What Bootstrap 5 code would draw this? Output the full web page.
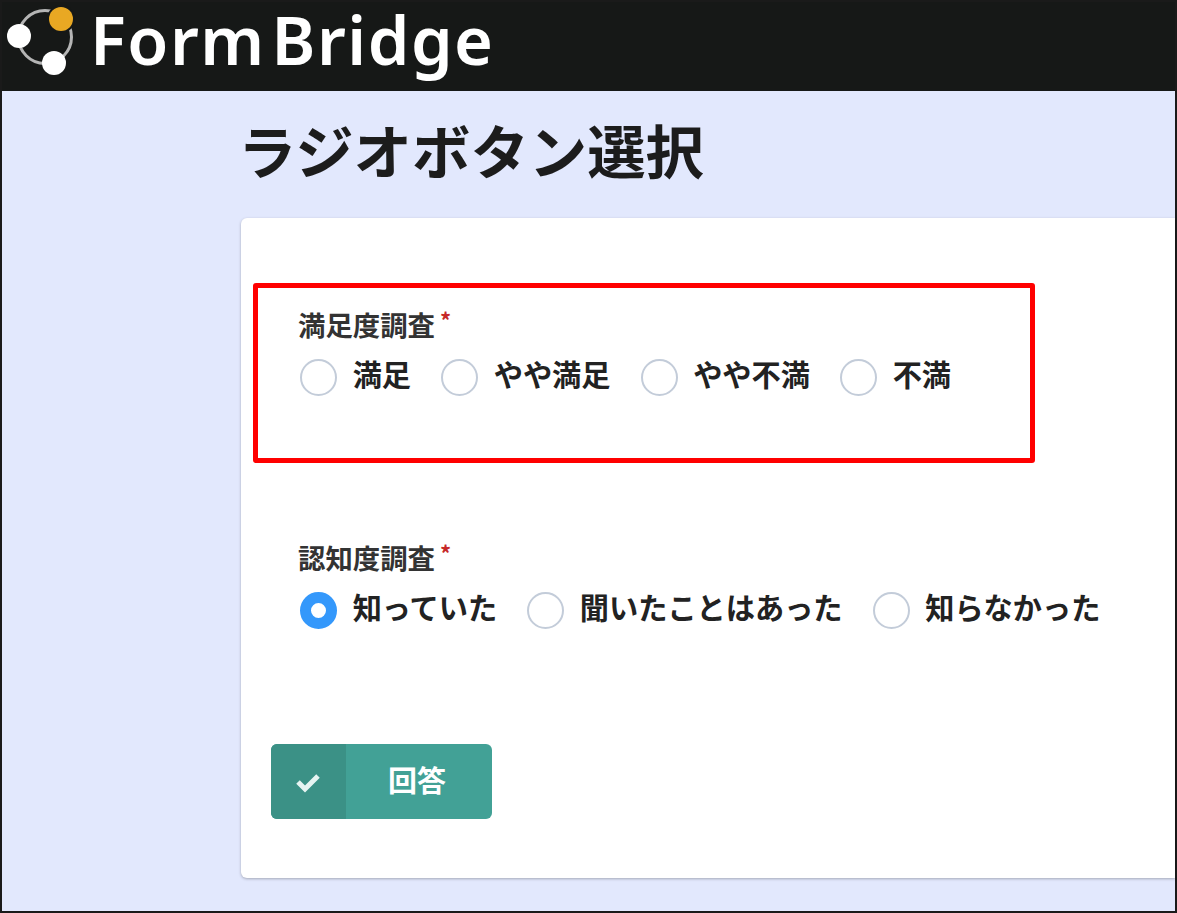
<!DOCTYPE html>
<html lang="ja">
<head>
<meta charset="utf-8">
<title>ラジオボタン選択</title>
<link href="https://cdn.jsdelivr.net/npm/bootstrap@5.3.0/dist/css/bootstrap.min.css" rel="stylesheet">
<style>
html,body{height:100%;margin:0}
body{font-family:"Noto Sans CJK JP","Noto Sans",sans-serif;background:#fff;overflow:hidden}
.fb-frame{width:1177px;height:913px;border:2px solid #1a1a1a;background:#e2e8fd;display:flex;flex-direction:column}
.fb-head{height:89px;background:#161817;flex:none;align-items:center;padding-left:2px}
.fb-logo{width:74px;height:76px;flex:none;margin-top:-8px}
.fb-brand{font-family:"Noto Sans",sans-serif;font-weight:600;font-size:66.6px;line-height:75px;padding-bottom:14px;color:#fff;margin-left:12px;white-space:pre;letter-spacing:1.5px;word-spacing:-13px}
.fb-main{padding-left:239px;flex:1}
.fb-title{font-size:58.4px;font-weight:700;color:#1c1c1c;line-height:70px;margin:23px 0 34px -3px;white-space:nowrap}
.fb-card{height:660px;width:934px;background:#fff;border-radius:6px 0 0 6px;box-shadow:0 1px 3px rgba(0,0,0,.28);padding-top:65px;padding-left:12px}
.fb-box{width:782px;height:180px;border:5px solid #f00;border-radius:3px;padding:17px 0 0 42px;margin-bottom:75px}
.fb-field{padding-left:47px;margin-bottom:115px}
.fb-label{font-size:27.4px;font-weight:700;color:#333;line-height:38px;white-space:nowrap;margin:0 0 14px -2px}
.fb-req{color:#c62828;font-size:22px;line-height:1;vertical-align:7px;margin-left:5px}
.fb-opts{gap:30px;white-space:nowrap}
.fb-opt{gap:15.7px;align-items:flex-start;height:39px;font-size:29.2px;font-weight:700;color:#222;line-height:32px}
.fb-radio{width:37px;height:37px;margin-top:2px;border-radius:50%;border:2px solid #c3ccd9;background:#fff;flex:none}
.fb-radio.fb-on{border:11px solid #3498fb}
.fb-submit{margin-left:17.5px;width:221px;height:75px;background:#42a196;border-radius:6px;overflow:hidden;color:#fff}
.fb-check{width:75px;background:#3b9186;flex:none}
.fb-send{font-size:29px;font-weight:700;flex:1;padding:0 3px 3px 0}
</style>
</head>
<body>
<div class="fb-frame">
  <header class="fb-head d-flex">
    <svg class="fb-logo" viewBox="0 0 74 76" aria-hidden="true">
      <circle cx="41" cy="32" r="26.5" fill="none" stroke="#b5b5b5" stroke-width="3"/>
      <circle cx="15" cy="31" r="12" fill="#fff"/>
      <circle cx="50" cy="58" r="12" fill="#fff"/>
      <circle cx="57" cy="14" r="14" fill="#161817"/>
      <circle cx="57" cy="14" r="12" fill="#e9a823"/>
    </svg>
    <div class="fb-brand">Form Bridge</div>
  </header>
  <main class="fb-main">
    <h1 class="fb-title">ラジオボタン選択</h1>
    <div class="fb-card">
      <div class="fb-box">
        <div class="fb-label">満足度調査<span class="fb-req">*</span></div>
        <div class="d-flex fb-opts">
          <div class="d-flex fb-opt"><span class="fb-radio"></span>満足</div>
          <div class="d-flex fb-opt"><span class="fb-radio"></span>やや満足</div>
          <div class="d-flex fb-opt"><span class="fb-radio"></span>やや不満</div>
          <div class="d-flex fb-opt"><span class="fb-radio"></span>不満</div>
        </div>
      </div>
      <div class="fb-field">
        <div class="fb-label">認知度調査<span class="fb-req">*</span></div>
        <div class="d-flex fb-opts">
          <div class="d-flex fb-opt"><span class="fb-radio fb-on"></span>知っていた</div>
          <div class="d-flex fb-opt"><span class="fb-radio"></span>聞いたことはあった</div>
          <div class="d-flex fb-opt"><span class="fb-radio"></span>知らなかった</div>
        </div>
      </div>
      <div class="fb-submit d-flex">
        <span class="fb-check d-flex align-items-center justify-content-center">
          <svg width="26" height="22" viewBox="0 0 26 22" aria-hidden="true"><path d="M3 11l7 7L23 5" fill="none" stroke="#e6f4f2" stroke-width="5"/></svg>
        </span>
        <span class="fb-send d-flex align-items-center justify-content-center">回答</span>
      </div>
    </div>
  </main>
</div>
<script src="https://cdn.jsdelivr.net/npm/bootstrap@5.3.0/dist/js/bootstrap.bundle.min.js"></script>
</body>
</html>
